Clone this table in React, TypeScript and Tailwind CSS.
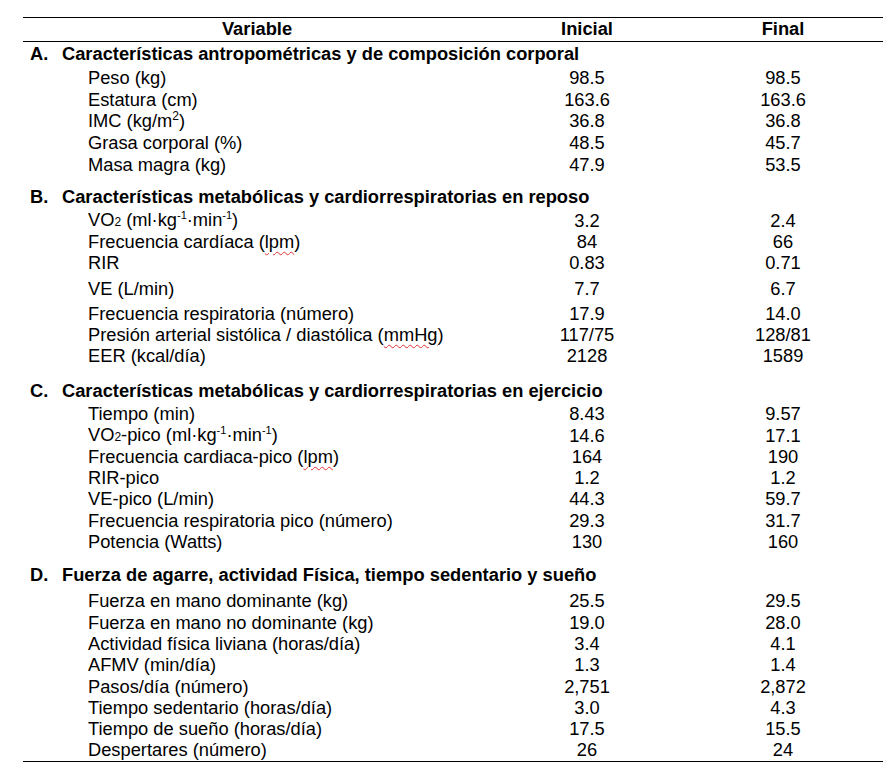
import React from "react";

type Row =
  | { kind: "section"; letter: string; title: string; gap?: string }
  | { kind: "item"; label: React.ReactNode; ini: string; fin: string; gap?: string };

const Lpm = () => (
  <span className="underline decoration-wavy decoration-[#e03131] decoration-1 underline-offset-[3px]">lpm</span>
);

const PerKgMin = () => (
  <>
    (ml·kg<sup className="text-[11px] relative -top-[7px]">-1</sup>·min<sup className="text-[11px] relative -top-[7px]">-1</sup>)
  </>
);

const rows: Row[] = [
  { kind: "section", letter: "A.", title: "Características antropométricas y de composición corporal", gap: "mb-[2px]" },
  { kind: "item", label: "Peso (kg)", ini: "98.5", fin: "98.5" },
  { kind: "item", label: "Estatura (cm)", ini: "163.6", fin: "163.6", gap: "-mb-[1px]" },
  {
    kind: "item",
    label: (
      <>
        IMC (kg/m<sup className="text-[12px] relative -top-[7px]">2</sup>)
      </>
    ),
    ini: "36.8",
    fin: "36.8",
  },
  { kind: "item", label: "Grasa corporal (%)", ini: "48.5", fin: "45.7" },
  { kind: "item", label: "Masa magra (kg)", ini: "47.9", fin: "53.5", gap: "mb-[10px]" },
  { kind: "section", letter: "B.", title: "Características metabólicas y cardiorrespiratorias en reposo", gap: "mb-[1px]" },
  {
    kind: "item",
    label: (
      <>
        VO<span className="text-[12px]">2</span> <PerKgMin />
      </>
    ),
    ini: "3.2",
    fin: "2.4",
  },
  {
    kind: "item",
    label: (
      <>
        Frecuencia cardíaca (<Lpm />)
      </>
    ),
    ini: "84",
    fin: "66",
    gap: "-mb-[1px]",
  },
  { kind: "item", label: "RIR", ini: "0.83", fin: "0.71", gap: "mb-[4px]" },
  { kind: "item", label: "VE (L/min)", ini: "7.7", fin: "6.7", gap: "mb-[3px]" },
  { kind: "item", label: "Frecuencia respiratoria (número)", ini: "17.9", fin: "14.0", gap: "-mb-[1px]" },
  {
    kind: "item",
    label: (
      <>
        Presión arterial sistólica / diastólica (
        <span className="underline decoration-wavy decoration-[#e03131] decoration-1 underline-offset-[3px]">mmHg</span>)
      </>
    ),
    ini: "117/75",
    fin: "128/81",
    gap: "-mb-[1px]",
  },
  { kind: "item", label: "EER (kcal/día)", ini: "2128", fin: "1589", gap: "mb-[13px]" },
  { kind: "section", letter: "C.", title: "Características metabólicas y cardiorrespiratorias en ejercicio", gap: "mb-[1px]" },
  { kind: "item", label: "Tiempo (min)", ini: "8.43", fin: "9.57", gap: "-mb-[1px]" },
  {
    kind: "item",
    label: (
      <>
        VO<span className="text-[12px]">2</span>-pico <PerKgMin />
      </>
    ),
    ini: "14.6",
    fin: "17.1",
  },
  {
    kind: "item",
    label: (
      <>
        Frecuencia cardiaca-pico (<Lpm />)
      </>
    ),
    ini: "164",
    fin: "190",
    gap: "-mb-[1px]",
  },
  { kind: "item", label: "RIR-pico", ini: "1.2", fin: "1.2", gap: "-mb-[1px]" },
  { kind: "item", label: "VE-pico (L/min)", ini: "44.3", fin: "59.7" },
  { kind: "item", label: "Frecuencia respiratoria pico (número)", ini: "29.3", fin: "31.7", gap: "-mb-[1px]" },
  { kind: "item", label: "Potencia (Watts)", ini: "130", fin: "160", gap: "mb-[11px]" },
  { kind: "section", letter: "D.", title: "Fuerza de agarre, actividad Física, tiempo sedentario y sueño", gap: "mb-[4px]" },
  { kind: "item", label: "Fuerza en mano dominante (kg)", ini: "25.5", fin: "29.5" },
  { kind: "item", label: "Fuerza en mano no dominante (kg)", ini: "19.0", fin: "28.0", gap: "-mb-[1px]" },
  { kind: "item", label: "Actividad física liviana (horas/día)", ini: "3.4", fin: "4.1", gap: "-mb-[1px]" },
  { kind: "item", label: "AFMV (min/día)", ini: "1.3", fin: "1.4" },
  { kind: "item", label: "Pasos/día (número)", ini: "2,751", fin: "2,872", gap: "-mb-[1px]" },
  { kind: "item", label: "Tiempo sedentario (horas/día)", ini: "3.0", fin: "4.3", gap: "-mb-[1px]" },
  { kind: "item", label: "Tiempo de sueño (horas/día)", ini: "17.5", fin: "15.5", gap: "-mb-[1px]" },
  { kind: "item", label: "Despertares (número)", ini: "26", fin: "24" },
];

export default function App() {
  return (
    <div
      className="w-[893px] h-[767px] bg-white text-black pt-[17px] pl-[23px] text-[18.3px] leading-[22px]"
      style={{ fontFamily: '"Liberation Sans", Arial, sans-serif' }}
    >
      <div className="w-[860px]">
        <div className="h-px bg-black" />
        <div className="grid grid-cols-[468px_192px_200px] h-[23px] items-center font-bold">
          <div className="text-center -mt-[2px]">Variable</div>
          <div className="text-center -mt-[2px]">Inicial</div>
          <div className="text-center -mt-[2px]">Final</div>
        </div>
        <div className="h-px bg-black" />

        {rows.map((r, i) =>
          r.kind === "section" ? (
            <div key={i} className={`flex h-[22px] items-center font-bold pl-[7px] mt-px ${r.gap ?? ""}`}>
              <span className="w-[32px]">{r.letter}</span>
              <span className="whitespace-nowrap">{r.title}</span>
            </div>
          ) : (
            <div key={i} className={`grid grid-cols-[468px_192px_200px] h-[22px] items-center ${r.gap ?? ""}`}>
              <div className="pl-[65px] whitespace-nowrap">{r.label}</div>
              <div className="text-center">{r.ini}</div>
              <div className="text-center">{r.fin}</div>
            </div>
          )
        )}

        <div className="h-px bg-black" />
      </div>
    </div>
  );
}
